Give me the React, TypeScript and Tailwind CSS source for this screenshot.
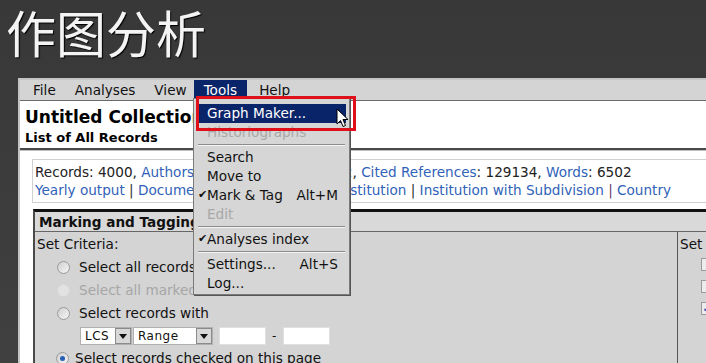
import React from "react";

const F = { fontFamily: '"DejaVu Sans", Verdana, sans-serif' };

function Radio({ checked = false, disabled = false }: { checked?: boolean; disabled?: boolean }) {
  return (
    <span
      className={`relative inline-block shrink-0 w-[13px] h-[13px] rounded-full border ${
        disabled ? "border-[#d8d8d8] bg-[#e2e2e2]" : "border-[#9a9a9a] bg-gradient-to-br from-[#cfcfcf] to-[#f6f6f6]"
      }`}
    >
      {checked && <span className="absolute left-[3px] top-[3px] w-[5px] h-[5px] rounded-full bg-[#2a5fb8]" />}
    </span>
  );
}

function Arrow() {
  return (
    <span className="flex items-center justify-center w-[16px] h-[16px] bg-[#d8d8d8] border border-[#8a8a8a]">
      <svg width="8" height="5" viewBox="0 0 8 5">
        <path d="M0 0 L8 0 L4 5 Z" fill="#111" />
      </svg>
    </span>
  );
}

function MenuItem({
  label,
  shortcut,
  check,
  disabled,
  hi,
}: {
  label: string;
  shortcut?: string;
  check?: boolean;
  disabled?: boolean;
  hi?: boolean;
}) {
  return (
    <div
      className={`relative flex items-center h-[19px] mx-[3px] pl-[10px] pr-[4px] ${
        hi ? "bg-[#0a246a] text-white" : disabled ? "text-[#a8a8a8]" : "text-[#111]"
      }`}
    >
      {check && <span className="absolute left-[1px] text-[11px]">✔</span>}
      <span className="flex-1">{label}</span>
      {shortcut && <span className="mr-[4px]">{shortcut}</span>}
    </div>
  );
}

function Sep() {
  return (
    <div className="h-[6px] mx-[4px] flex flex-col justify-center">
      <div className="h-[1px] bg-[#8c8c8c]" />
      <div className="h-[1px] bg-[#f4f4f4]" />
    </div>
  );
}

export default function App() {
  return (
    <div className="w-[706px] h-[363px] overflow-hidden bg-gradient-to-b from-[#383838] to-[#404040] flex flex-col" style={F}>
      <div
        className="h-[78px] shrink-0 pl-[6px] text-[50px] leading-[62px] text-[#f4f4f4]"
        style={{ fontFamily: '"Noto Sans CJK SC", "Noto Sans", sans-serif', textShadow: "1px 1px 1px #000" }}
      >
        作图分析
      </div>
      <div className="relative ml-[18px] flex-1 flex flex-col border-l-2 border-t-2 border-[#c4c4c4] bg-white text-[13.6px]">
        {/* menu bar */}
        <div className="h-[21px] shrink-0 flex items-stretch bg-[#d4d4d4] border-b border-[#6a6a6a] text-[#111] pl-[3px]">
          <span className="px-[10px] flex items-center">File</span>
          <span className="px-[9px] flex items-center">Analyses</span>
          <span className="pl-[10px] pr-[7px] flex items-center">View</span>
          <span className="px-[10px] flex items-center bg-[#0a246a] text-white">Tools</span>
          <span className="px-[12px] flex items-center">Help</span>
        </div>
        {/* header */}
        <div className="h-[49px] shrink-0 bg-white pl-[5px] border-b-2 border-[#4a4a4a] text-[#000]">
          <div className="text-[17px] font-bold leading-[22px] pt-[5px]">Untitled Collection</div>
          <div className="text-[13px] font-bold leading-[18px] mt-[1px]">List of All Records</div>
        </div>
        <div className="h-[1px] bg-[#bdbdbd]" />
        {/* records box */}
        <div className="bg-white pt-[8px] pb-[6px] pl-[12px]">
          <div className="border border-[#d0d0d0] border-r-0 pl-[2px] pt-[3px] pb-[3px] leading-[18px] whitespace-nowrap text-[#222]">
            <div>
              Records: 4000, <span className="text-[#2f62b8]">Authors</span>: 10942, <span className="text-[#2f62b8]">Journals</span>: 1782,{" "}
              <span className="text-[#2f62b8]">Cited References</span>: 129134, <span className="text-[#2f62b8]">Words</span>: 6502
            </div>
            <div className="text-[#2f62b8]">
              Yearly output <span className="text-[#333]">|</span> Document Type <span className="text-[#333]">|</span> Language{" "}
              <span className="text-[#333]">|</span> Institution <span className="text-[#333]">|</span> Institution with Subdivision{" "}
              <span className="text-[#6a3a6a]">|</span> Country
            </div>
          </div>
        </div>
        {/* panel */}
        <div className="flex-1 bg-white pl-[13px]">
          <div className="h-full border-t-[3px] border-t-[#111] border-l-2 border-l-[#4a4a4a] flex flex-col">
            <div className="h-[20px] shrink-0 bg-[#d9d9d9] border-b border-[#666] pl-[4px] font-bold leading-[20px] text-[#111]">
              Marking and Tagging Tool
            </div>
            <div className="flex-1 flex bg-[#d4d4d4] text-[#111]">
              <div className="w-[643px] shrink-0 border-r border-[#555] pl-[2px] pt-[1px]">
                <div className="h-[23px] leading-[23px]">Set Criteria:</div>
                <div className="h-[23px] flex items-center pl-[20px] gap-[9px]">
                  <Radio />
                  <span>Select all records</span>
                </div>
                <div className="h-[23px] flex items-center pl-[20px] gap-[9px] text-[#a6a6a6]">
                  <Radio disabled />
                  <span>Select all marked records</span>
                </div>
                <div className="h-[23px] flex items-center pl-[20px] gap-[9px]">
                  <Radio />
                  <span>Select records with</span>
                </div>
                <div className="h-[22px] flex items-center pl-[43px] text-[12px] tracking-[0.5px]">
                  <div className="flex items-center h-[18px] w-[52px] bg-white border border-[#b0b0b0] pl-[4px] justify-between">
                    <span>LCS</span>
                    <Arrow />
                  </div>
                  <div className="flex items-center h-[18px] w-[80px] ml-[1px] bg-white border border-[#b0b0b0] pl-[4px] justify-between">
                    <span>Range</span>
                    <Arrow />
                  </div>
                  <div className="ml-[6px] w-[47px] h-[18px] bg-white border border-[#e0e0e0]" />
                  <span className="mx-[6px]">-</span>
                  <div className="w-[47px] h-[18px] bg-white border border-[#e0e0e0]" />
                </div>
                <div className="h-[22px] flex items-center pl-[19px] gap-[6px]">
                  <Radio checked />
                  <span>Select records checked on this page</span>
                </div>
              </div>
              <div className="flex-1 pl-[2px] pt-[1px]">
                <div className="h-[23px] leading-[23px]">Set</div>
                <div className="flex flex-col gap-[9px] pl-[21px] pt-[2px]">
                  <span className="w-[12px] h-[13px] border border-[#9a9a9a] bg-[#ececec]" />
                  <span className="w-[12px] h-[13px] border border-[#9a9a9a] bg-[#ececec]" />
                  <span className="w-[12px] h-[13px] border border-[#9a9a9a] bg-[#ececec] text-[#4060c0] text-[9px] leading-[12px] pl-[1px]">✔</span>
                </div>
              </div>
            </div>
          </div>
        </div>

        {/* dropdown menu */}
        <div className="absolute left-[173px] top-[18px] w-[157px] h-[197px] bg-[#d6d6d6] border border-[#7a7a7a] shadow-[1px_1px_0_#555] pt-[5px]">
          <MenuItem label="Graph Maker..." hi />
          <MenuItem label="Historiographs" disabled />
          <Sep />
          <MenuItem label="Search" />
          <MenuItem label="Move to" />
          <MenuItem label="Mark & Tag" shortcut="Alt+M" check />
          <MenuItem label="Edit" disabled />
          <Sep />
          <MenuItem label="Analyses index" check />
          <Sep />
          <MenuItem label="Settings..." shortcut="Alt+S" />
          <MenuItem label="Log..." />
        </div>
        {/* red highlight */}
        <div className="absolute left-[176px] top-[16px] w-[160px] h-[35px] border-[3px] border-[#e0101a]" />
        {/* cursor */}
        <svg className="absolute left-[316px] top-[28px]" width="13" height="20" viewBox="0 0 13 20">
          <path d="M1 1 L1 16 L4.5 12.5 L7 18.5 L9.5 17.5 L7 11.5 L12 11.5 Z" fill="#fff" stroke="#000" strokeWidth="1" strokeLinejoin="round" />
        </svg>
      </div>
    </div>
  );
}
